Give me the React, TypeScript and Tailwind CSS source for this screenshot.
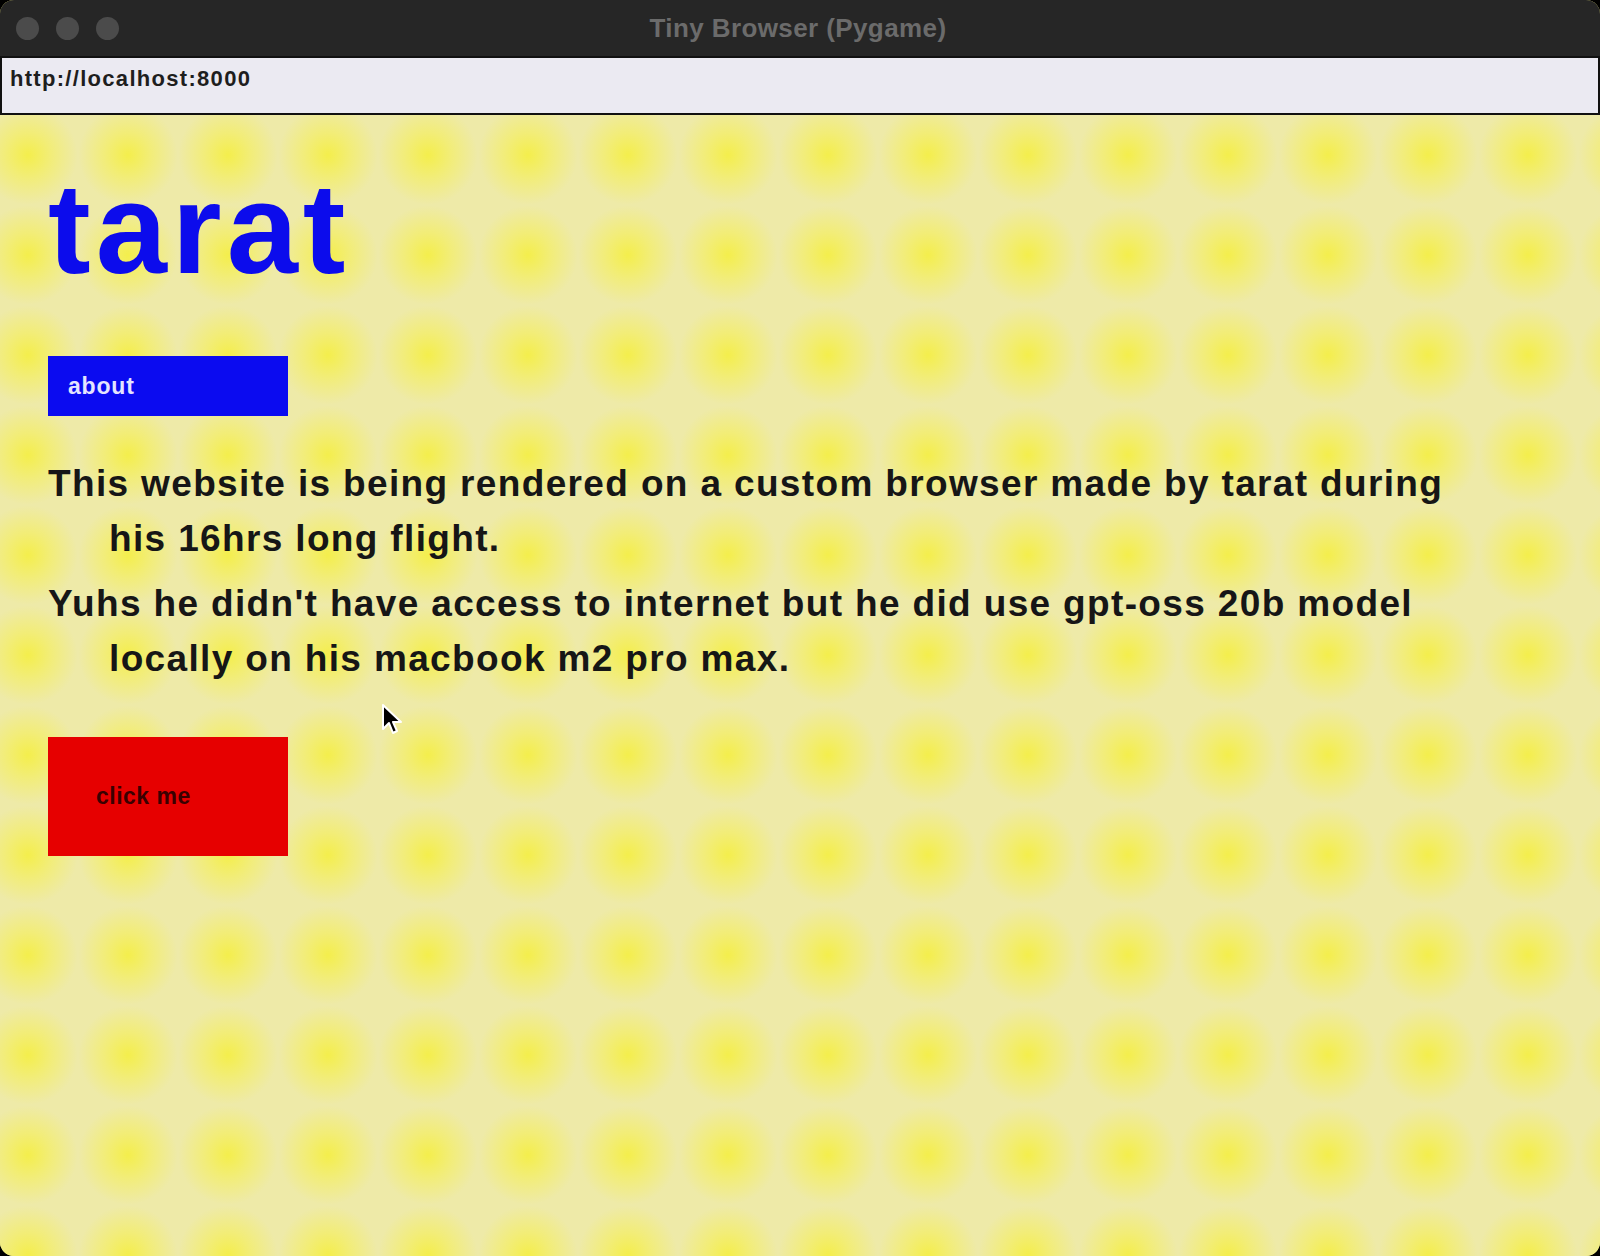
import React from "react";

const sans = "font-['Liberation_Sans',Arial,sans-serif]";

function Cursor(){
return (
<svg className="absolute left-[381px] top-[588px]" width="22" height="34" viewBox="0 0 22 34">
<path d="M2 2 L2 26 L8 20 L12 30 L16 28 L12 19 L20 19 Z" fill="#000" stroke="#fff" strokeWidth="2" strokeLinejoin="round"/>
</svg>
);
}

export default function App(){
return (
<div className={"w-[1600px] h-[1256px] bg-black " + sans}>
<div className="w-full h-full rounded-[14px] overflow-hidden flex flex-col bg-[#f1ec84]">
{/* title bar */}
<div className="h-[56px] bg-[#262626] flex items-center relative shrink-0">
<div className="flex gap-[17px] pl-[16px]">
<span className="w-[23px] h-[23px] rounded-full bg-[#4b4b4b]"></span>
<span className="w-[23px] h-[23px] rounded-full bg-[#4b4b4b]"></span>
<span className="w-[23px] h-[23px] rounded-full bg-[#4b4b4b]"></span>
</div>
<div className="flex-1 text-center text-[26px] font-bold text-[#6b6b6b] -ml-[123px] leading-none tracking-[0.4px]">Tiny Browser (Pygame)</div>
</div>
{/* address bar */}
<div className="h-[59px] shrink-0 border-2 border-[#111] bg-[#ebeaf2] px-[8px] pt-[6px] text-[22px] font-bold text-[#1e1e1e] tracking-[1.3px] leading-[30px]">
http://localhost:8000
</div>
{/* page */}
<div className="relative flex-1 bg-[radial-gradient(circle_at_center,#f4ee4c_0%,#f2ed78_32%,#eeeaa8_70%)] bg-[length:100px_100px] bg-[position:-22px_-10px] pl-[48px]">
<h1 className="mt-[50px] text-[128px] leading-[128px] font-bold text-[#0c0cec] tracking-[5px]">tarat</h1>
<div className="mt-[63px] w-[240px] h-[60px] bg-[#0b0bf0] flex items-center pl-[20px] text-[23px] font-bold text-[#e4e4ff] tracking-[0.8px]">about</div>
<div className="mt-[40px] text-[37px] font-bold text-[#161616] leading-[55px] w-[1540px] tracking-[1.35px]">
<p className="pl-[61px] -indent-[61px]">This website is being rendered on a custom browser made by tarat during<br/>his 16hrs long flight.</p>
<p className="mt-[10px] pl-[61px] -indent-[61px]">Yuhs he didn't have access to internet but he did use gpt-oss 20b model<br/>locally on his macbook m2 pro max.</p>
</div>
<div className="mt-[51px] w-[240px] h-[119px] bg-[#e60000] flex items-center pl-[48px] text-[23px] font-bold text-[#3a0000] tracking-[0.5px]">click me</div>
<Cursor/>
</div>
</div>
</div>
);
}
